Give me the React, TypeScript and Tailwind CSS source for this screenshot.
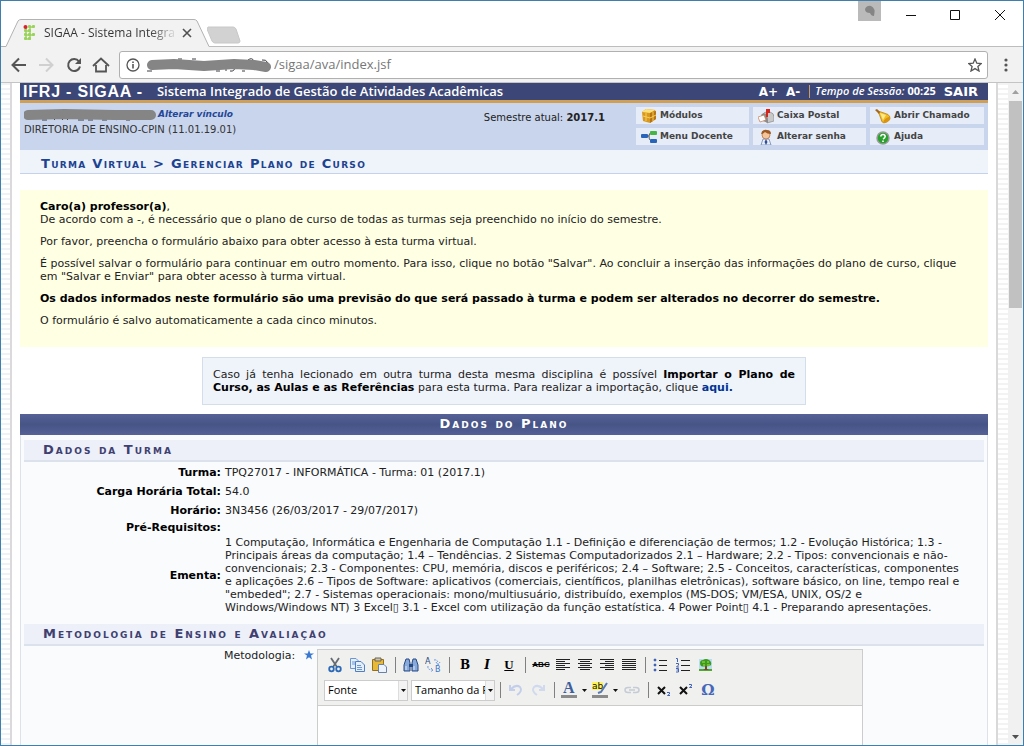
import type { ReactNode } from 'react';

const verdana = "font-['DejaVu_Sans','Verdana',sans-serif]";
const ui = "font-['Open_Sans','Noto_Sans',sans-serif]";

function Scribble({ className, d, tips }: { className: string; d: string; tips: string }) {
  return (
    <svg className={className} fill="none" aria-hidden="true">
      <path d={tips} stroke="#3a3d42" strokeWidth="1" />
      <path d={d} stroke="#858585" strokeWidth="10" strokeLinecap="round" strokeLinejoin="round" />
    </svg>
  );
}

function TitleBar() {
  return (
    <div className="flex h-[45px] shrink-0 items-end justify-between bg-white">
      <div className="flex items-end">
        <div className="relative flex h-[27px] w-[208px] items-center pl-[22px]">
          <svg className="absolute inset-0" width="210" height="28" fill="none" aria-hidden="true">
            <path d="M0 27.500H5L17 2Q18 .5 20 .5H193Q195 .5 196 2L208 27.500V28H0Z" fill="#f2f2f2" />
            <path d="M0 27.500H5L17 2Q18 .5 20 .5H193Q195 .5 196 2L208 27.500" stroke="#b2b2b2" />
          </svg>
          <svg className="relative" width="14" height="16" viewBox="0 0 14 16" fill="#9bd35b" aria-hidden="true">
            <rect x="5" y="0" width="3" height="3" rx="1" />
            <rect x="9" y="0" width="3" height="3" rx="1" />
            <rect x="1" y="4" width="3" height="3" rx="1" />
            <rect x="5" y="4" width="3" height="3" rx="1" />
            <rect x="1" y="8" width="3" height="3" rx="1" />
            <rect x="5" y="8" width="3" height="3" rx="1" />
            <rect x="9" y="8" width="3" height="3" rx="1" />
            <rect x="1" y="12" width="3" height="3" rx="1" />
            <rect x="5" y="12" width="3" height="3" rx="1" />
            <path d="M3 3V14M7 2V14M2 6H8M2 10H11M2 14H8M7 2H11" stroke="#9bd35b" strokeWidth="1.500" />
            <circle cx="2.500" cy="2" r="2" fill="#d8232a" />
          </svg>
          <span className="relative ml-[7px] w-[131px] overflow-hidden bg-linear-to-r from-[#333] from-80% to-[#ddd] bg-clip-text text-[12px] whitespace-nowrap text-transparent">
            SIGAA - Sistema Integrado
          </span>
          <button type="button" aria-label="Fechar guia" className="relative ml-[7px]">
            <svg width="10" height="10" stroke="#505050" strokeWidth="1.6">
              <path d="M1 1L9 9M9 1L1 9" />
            </svg>
          </button>
        </div>
        <button type="button" aria-label="Nova guia" className="mb-[2px] -ml-[2px]">
          <svg width="34" height="18">
            <path d="M1 1H26Q28 1 29 3L33 15Q33 17 31 17H8Q6 17 5 15L0 3Z" fill="#d2d2d2" stroke="#c8c8c8" />
          </svg>
        </button>
      </div>
      <div className="flex h-full items-start">
        <button type="button" aria-label="Usuário" className="mr-[24px] flex h-5 w-[23px] items-center justify-center bg-[#bababa]">
          <svg width="12" height="12" fill="#858585">
            <path d="M1 4Q3 0 7 1Q12 3 10 11Q7 11 6 8Q1 8 1 4Z" />
          </svg>
        </button>
        <button type="button" aria-label="Minimizar" className="mt-[8px] mr-[32px]">
          <svg width="12" height="12" stroke="#111">
            <path d="M1 6.5H11" />
          </svg>
        </button>
        <button type="button" aria-label="Maximizar" className="mt-[8px] mr-[33px]">
          <svg width="12" height="12" stroke="#111" fill="none">
            <path d="M1.500 1.500H10.500V10.500H1.500Z" />
          </svg>
        </button>
        <button type="button" aria-label="Fechar" className="mt-[8px] mr-[17px]">
          <svg width="12" height="12" stroke="#111">
            <path d="M1 1L11 11M11 1L1 11" />
          </svg>
        </button>
      </div>
    </div>
  );
}

function AddressBar() {
  return (
    <div className="flex h-[37px] shrink-0 items-center border-t border-b border-t-[#bdbdbd] border-b-[#c4c4c4] bg-[#f2f2f2] pl-[10px]">
      <button type="button" aria-label="Voltar">
        <svg width="16" height="16" fill="none" stroke="#555" strokeWidth="2">
          <path d="M15 8H2M8 1.500L1.500 8L8 14.500" />
        </svg>
      </button>
      <button type="button" aria-label="Avançar" className="ml-[11px]">
        <svg width="16" height="16" fill="none" stroke="#d0d0d0" strokeWidth="2">
          <path d="M1 8H14M8 1.500L14.500 8L8 14.500" />
        </svg>
      </button>
      <button type="button" aria-label="Recarregar" className="ml-3">
        <svg width="16" height="16" fill="none" stroke="#555" strokeWidth="2">
          <path d="M13 4.500A6 6 0 1 0 14 9.500" />
          <path d="M15 1V7H9Z" fill="#555" stroke="none" />
        </svg>
      </button>
      <button type="button" aria-label="Página inicial" className="ml-[10px]">
        <svg width="18" height="16" fill="none" stroke="#555" strokeWidth="1.800">
          <path d="M1 9L9 1.500L17 9M4 8V14.500H14V8" />
        </svg>
      </button>
      <div className="ml-[9px] flex h-[28px] flex-1 items-center rounded-[3px] border border-[#b0b0b0] bg-white pr-[5px] pl-[6px]">
        <svg width="14" height="14" fill="none" stroke="#555" aria-hidden="true">
          <circle cx="7" cy="7" r="6" strokeWidth="1.300" />
          <path d="M7 6V10.500M7 3.500V5" strokeWidth="1.600" />
        </svg>
        <Scribble
          className="ml-[4px] h-[16px] w-[130px]"
          d="M8 8L30 7L60 9L90 7L110 8L122 10"
          tips="M3 14H8M34 2H38M48 2H52M72 14H76M82 14V10M86 14Q91 15 91 9M98 14H101M104 3Q108 0 110 4M118 3Q122 2 124 6V12"
        />
        <input
          aria-label="Endereço"
          defaultValue="/sigaa/ava/index.jsf"
          className="min-w-0 flex-1 bg-transparent text-[13px] text-[#777] outline-none"
        />
        <button type="button" aria-label="Favoritar">
          <svg width="14" height="14" fill="none" stroke="#555" strokeWidth="1.300">
            <path d="M7 1L8.800 5.200L13.300 5.500L9.900 8.500L11 13L7 10.600L3 13L4.100 8.500L.7 5.500L5.200 5.200Z" />
          </svg>
        </button>
      </div>
      <button type="button" aria-label="Menu" className="mr-[15px] ml-[16px]">
        <svg width="4" height="14" fill="#555">
          <circle cx="2" cy="2" r="1.600" />
          <circle cx="2" cy="7" r="1.600" />
          <circle cx="2" cy="12" r="1.600" />
        </svg>
      </button>
    </div>
  );
}

const menu: { label: string; icon: ReactNode }[] = [
  {
    label: 'Módulos',
    icon: (
      <>
        <path d="M1 4L5 1L14 2L15 4V11L9 15L2 13Z" fill="#d9981e" />
        <path d="M1 4L5 1L14 2L9 5Z" fill="#ffe27a" />
        <path d="M9 5L15 3V11L9 15Z" fill="#b87312" />
        <path d="M2 8L9 10L15 7M5 5V13M12 4V13" stroke="#f6cf5a" fill="none" />
      </>
    ),
  },
  {
    label: 'Caixa Postal',
    icon: (
      <>
        <path d="M5 6Q6 4 9 4H12Q16 5 16 9V13L9 15V10Z" fill="#c9c9c9" stroke="#888" strokeWidth=".7" />
        <path d="M3 7Q5 4 8 6Q10 8 10 15L5 13Z" fill="#8a8a8a" />
        <path d="M0 9L6 7L8 12L2 14Z" fill="#fff" stroke="#c57b52" strokeWidth=".7" />
        <path d="M8 1H12V5H10V9H8Z" fill="#d4261c" />
      </>
    ),
  },
  {
    label: 'Abrir Chamado',
    icon: (
      <>
        <path d="M3 3L9 5Q14 6 15 9Q14 13 9 15Q6 14 6 11Z" fill="#f3bd21" stroke="#b47a0b" strokeWidth=".7" />
        <path d="M0 2L2 1L5 4L4 6Z" fill="#a3671d" />
        <path d="M5 5L11 7L8 12Z" fill="#ffe888" />
        <ellipse cx="12" cy="12" rx="4" ry="2" transform="rotate(-38 12 12)" fill="#d99512" />
      </>
    ),
  },
  {
    label: 'Menu Docente',
    icon: (
      <>
        <path d="M6 7H8Q8 4 10 4M8 7Q8 12 11 12" stroke="#555" fill="none" />
        <rect x="0" y="5" width="7" height="4" rx="1" fill="#2865ba" />
        <rect x="9" y="2" width="7" height="4" rx="1" fill="#45b544" />
        <rect x="9" y="10" width="7" height="4" rx="1" fill="#2865ba" />
      </>
    ),
  },
  {
    label: 'Alterar senha',
    icon: (
      <>
        <path d="M3 16L5 10H11L13 16Z" fill="#e8eef8" stroke="#6e87b4" strokeWidth=".8" />
        <path d="M8 10L9.500 13L8 16L6.500 13Z" fill="#2c4e99" />
        <circle cx="8" cy="6" r="4" fill="#f4c49a" stroke="#ad6c38" strokeWidth=".7" />
        <path d="M3 5Q4 0 9 1Q13 1 13 5Q9 5 7 3Q5 5 3 5Z" fill="#9c5a22" />
      </>
    ),
  },
  {
    label: 'Ajuda',
    icon: (
      <>
        <circle cx="8" cy="9" r="6" fill="#27a32b" stroke="#9a9a9a" strokeWidth="1.500" />
        <path d="M5.800 7.500Q6 5.500 8 5.500T10.200 7.500Q10 9 8 10M8 11.500V13" stroke="#fff" strokeWidth="1.600" fill="none" />
      </>
    ),
  },
];

function SystemHeader() {
  return (
    <header>
      <div className="flex h-[20px] items-center border-b-[3px] border-[#cf9f55] bg-[#3c4777] px-[3px] text-white">
        <h1 className="font-['Liberation_Sans',Arial,sans-serif] text-[16px] leading-[17px] font-bold tracking-wider whitespace-pre">IFRJ - SIGAA -</h1>
        <span className={`ml-[14px] flex-1 text-[13px] leading-[17px] font-semibold whitespace-nowrap ${ui}`}>
          Sistema Integrado de Gestão de Atividades Acadêmicas
        </span>
        <button type="button" className="text-[12px] font-bold">A+</button>
        <button type="button" className="ml-[8px] text-[12px] font-bold">A-</button>
        <span className="ml-[9px] h-[13px] w-px bg-[#c99d66]" />
        <span className={`ml-[5px] text-[11px] font-semibold italic ${ui}`}>Tempo de Sessão:</span>
        <span className={`ml-[3px] text-[11px] font-bold ${ui}`}>00:25</span>
        <a href="#sair" className="mr-[7px] ml-[8px] text-[13px] font-bold">SAIR</a>
      </div>
      <div className="flex h-[47px] justify-between bg-[#c8d5ec] pr-[4px] pl-[4px]">
        <div className="pt-[5px]">
          <div className="flex h-[13px] items-center">
            <Scribble
              className="h-[12px] w-[132px]"
              d="M4 6L40 5L90 6L127 6"
              tips="M18 11H23M30 11L33 8M38 11L41 8L44 11M54 11H60M64 11H69M78 11H83M92 11L96 8M102 11H106"
            />
            <a href="#vinculo" className="ml-[2px] text-[9px] font-bold text-[#264796] italic">Alterar vínculo</a>
          </div>
          <div className="mt-[1px] text-[10px] text-[#333]">DIRETORIA DE ENSINO-CPIN (11.01.19.01)</div>
        </div>
        <div className="flex">
          <p className="mt-[7px] mr-[31px] text-[10px] text-[#222]">
            Semestre atual: <b>2017.1</b>
          </p>
          <nav className="mt-[4px] grid h-[38px] grid-cols-[113px_113px_114px] grid-rows-2 gap-[4px]">
            {menu.map((item) => (
              <a key={item.label} href="#menu" className="flex items-center bg-[#e6ecf8] pl-[5px] text-[9px] font-bold text-[#444]">
                <svg className="mr-[3px]" width="16" height="16" viewBox="0 0 16 16" aria-hidden="true">{item.icon}</svg>
                {item.label}
              </a>
            ))}
          </nav>
        </div>
      </div>
      <h2 className="h-[24px] border-b border-[#c4d2eb] bg-[#eff3fa] pl-[21px] text-[13px] leading-[27px] font-bold tracking-widest text-[#1c4391] [font-variant:small-caps]">
        Turma Virtual &gt; Gerenciar Plano de Curso
      </h2>
    </header>
  );
}

function SectionTitle({ children }: { children: ReactNode }) {
  return (
    <h4 className="mx-[3px] h-[22px] border-b-2 border-[#dce2ec] bg-[#edf0f9] pl-[19px] text-[13px] leading-[20px] font-bold tracking-[2px] text-[#404070] [font-variant:small-caps]">
      {children}
    </h4>
  );
}

const details = [
  { label: 'Turma:', value: 'TPQ27017 - INFORMÁTICA - Turma: 01 (2017.1)', row: 'h-[19px]' },
  { label: 'Carga Horária Total:', value: '54.0', row: 'h-[19px]' },
  { label: 'Horário:', value: '3N3456 (26/03/2017 - 29/07/2017)', row: 'h-[19px]' },
  { label: 'Pré-Requisitos:', value: '', row: 'h-[15px]' },
  {
    label: 'Ementa:',
    value:
      '1 Computação, Informática e Engenharia de Computação 1.1 - Definição e diferenciação de termos; 1.2 - Evolução Histórica; 1.3 - Principais áreas da computação; 1.4 – Tendências. 2 Sistemas Computadorizados 2.1 – Hardware; 2.2 - Tipos: convencionais e não-convencionais; 2.3 - Componentes: CPU, memória, discos e periféricos; 2.4 – Software; 2.5 - Conceitos, características, componentes e\u00a0aplicações 2.6 – Tipos de Software: aplicativos (comerciais, científicos, planilhas eletrônicas), software básico, on line, tempo real e "embeded"; 2.7 - Sistemas operacionais: mono/multiusuário, distribuído, exemplos (MS-DOS; VM/ESA, UNIX, OS/2 e Windows/Windows\u00a0NT) 3 Excel▯ 3.1 - Excel com utilização da função estatística. 4 Power Point▯ 4.1 - Preparando apresentações.',
    row: 'h-[80px]',
  },
];

function Tool({ label, children }: { label: string; children: ReactNode }) {
  return (
    <button type="button" aria-label={label} className="flex w-[22px] shrink-0 items-center justify-center">
      <svg width="16" height="16" viewBox="0 0 16 16" fill="none" aria-hidden="true">{children}</svg>
    </button>
  );
}

function Letter({ label, className, children }: { label: string; className: string; children: ReactNode }) {
  return (
    <button type="button" aria-label={label} className={`w-[22px] shrink-0 text-center ${className}`}>
      {children}
    </button>
  );
}

function Separator() {
  return (
    <span className="flex w-[10px] shrink-0 justify-center">
      <span className="h-4 w-px bg-[#808080]" />
    </span>
  );
}

function DropTool({ label, children }: { label: string; children: ReactNode }) {
  return (
    <button type="button" aria-label={label} className="flex w-[31px] shrink-0 items-center pl-[2px]">
      <svg width="17" height="18" viewBox="0 0 17 18" fill="none" aria-hidden="true">{children}</svg>
      <svg className="ml-[4px]" width="5" height="3" aria-hidden="true"><path d="M0 0H5L2.500 3Z" fill="#111" /></svg>
    </button>
  );
}

function Combo({ label }: { label: string }) {
  return (
    <span className="flex h-[21px] w-[84px] items-center border border-[#ccc] bg-white">
      <select aria-label={label} className={`h-full w-[73px] appearance-none overflow-hidden pl-[3px] text-[11px] text-black ${ui}`}>
        <option>{label}</option>
      </select>
      <span className="flex h-full w-[9px] items-center justify-center border-l border-[#ddd] bg-[#f3f3f3]">
        <svg width="5" height="3" aria-hidden="true"><path d="M0 0H5L2.500 3Z" fill="#111" /></svg>
      </span>
    </span>
  );
}

function Editor() {
  return (
    <div className="h-[260px] w-[546px] border border-[#ccc] bg-white">
      <div className="flex h-[56px] flex-col border-b border-[#ccc] bg-[#f0f0ee] pt-[3px] pl-[6px]">
        <div className="flex h-[24px] items-center">
          <Tool label="Recortar">
            <path d="M4 1L10 10M12 1L6 10" stroke="#666b73" strokeWidth="1.800" />
            <circle cx="4.500" cy="12" r="2.300" stroke="#2b69b8" strokeWidth="1.800" />
            <circle cx="11.500" cy="12" r="2.300" stroke="#2b69b8" strokeWidth="1.800" />
          </Tool>
          <Tool label="Copiar">
            <path d="M1.500 1.500H7L9.500 4V11.500H1.500Z" fill="#e5effc" stroke="#6f96cd" />
            <path d="M6.500 4.500H12L15.500 8V14.500H6.500Z" fill="#e5effc" stroke="#4f7fc2" />
            <path d="M3 5H6M3 7H6M8 8.500H12M8 10.500H13M8 12.500H13" stroke="#6f96cd" />
          </Tool>
          <Tool label="Colar">
            <path d="M1.500 2.500H12.500V13.500H1.500Z" fill="#e8b937" stroke="#927023" />
            <path d="M4 1H10V4H4Z" fill="#c9c4b5" stroke="#6e654c" />
            <path d="M7.500 7.500H13L15.500 10V15.500H7.500Z" fill="#edf3fd" stroke="#6a80a5" />
          </Tool>
          <Separator />
          <Tool label="Localizar">
            <path d="M3 2H6L7 6V14H1V8ZM10 2H13L15 8V14H9V6Z" fill="#88a9d9" stroke="#244985" />
            <path d="M6 7H10V10H6Z" fill="#244985" />
            <path d="M3 9V13M11 9V13" stroke="#dce9fb" />
          </Tool>
          <Tool label="Substituir">
            <text x="0" y="7" fontSize="8" fill="#26497e" fontFamily="DejaVu Sans">A</text>
            <text x="10" y="15" fontSize="8" fill="#3975cc" fontFamily="DejaVu Sans">B</text>
            <path d="M9 3Q13 2 13 7M11 5L13 8L15 5M3 9Q2 13 8 13M6 11L8 13L6 15" stroke="#6e9ae0" strokeDasharray="2 1" />
          </Tool>
          <Separator />
          <Letter label="Negrito" className="font-['DejaVu_Serif',serif] text-[12px] font-bold text-black">B</Letter>
          <Letter label="Itálico" className="font-['DejaVu_Serif',serif] text-[12px] font-bold text-black italic">I</Letter>
          <Letter label="Sublinhado" className="font-['Liberation_Serif',serif] text-[13px] font-bold text-black underline">U</Letter>
          <Separator />
          <Letter label="Tachado" className="font-['Liberation_Sans',sans-serif] text-[8px] font-bold text-black line-through">ABC</Letter>
          <Tool label="Alinhar à esquerda"><path d="M1 2.500H15M1 4.500H10M1 6.500H15M1 8.500H10M1 10.500H15M1 12.500H10" stroke="#222" /></Tool>
          <Tool label="Centralizar"><path d="M1 2.500H15M3 4.500H13M1 6.500H15M3 8.500H13M1 10.500H15M3 12.500H13" stroke="#222" /></Tool>
          <Tool label="Alinhar à direita"><path d="M1 2.500H15M6 4.500H15M1 6.500H15M6 8.500H15M1 10.500H15M6 12.500H15" stroke="#222" /></Tool>
          <Tool label="Justificar"><path d="M1 2.500H15M1 4.500H15M1 6.500H15M1 8.500H15M1 10.500H15M1 12.500H15" stroke="#222" /></Tool>
          <Separator />
          <Tool label="Lista">
            <path d="M6 3.500H14M6 8.500H14M6 13.500H14" stroke="#222" />
            <path d="M1 2H3V4H1ZM1 7H3V9H1ZM1 12H3V14H1Z" fill="#4263b5" stroke="#4263b5" strokeWidth=".5" />
          </Tool>
          <Tool label="Lista numerada">
            <path d="M6 3.500H15M6 8.500H15M6 13.500H15" stroke="#222" />
            <path d="M1 1.500H2.500V5M1 6.500H3.500V8L1.500 10H4M1 11.500H3.500V15H1M1.500 13H3.500" stroke="#4263b5" />
          </Tool>
          <Tool label="Imagem">
            <path d="M2 2H15V14H2Z" fill="#b9dcf5" />
            <path d="M2 12H15V14H2Z" fill="#55a72b" />
            <path d="M8 7H10L10 12L12 13H6L8 12Z" fill="#754a1e" />
            <path d="M3 6Q3 3 6 3Q9 1 12 3Q15 5 14 8Q12 10 9 9Q6 10 4 9Q3 8 3 6Z" fill="#3c9a1d" />
            <path d="M5 5H8M10 5H12M6 8H8M10 8H13" stroke="#b1e04c" />
          </Tool>
        </div>
        <div className="flex h-[26px] items-center">
          <Combo label="Fonte" />
          <span className="w-[3px]" />
          <Combo label="Tamanho da Fonte" />
          <Separator />
          <Tool label="Desfazer"><path d="M2 3V8H7M3 7Q8 2 12 5Q15 9 9 13" stroke="#c3cfea" strokeWidth="2" /></Tool>
          <Tool label="Refazer"><path d="M14 3V8H9M13 7Q8 2 4 5Q1 9 7 13" stroke="#d0d9ee" strokeWidth="2" /></Tool>
          <Separator />
          <DropTool label="Cor do texto">
            <text x="2" y="12" fontSize="16" fontWeight="bold" fontFamily="Liberation Serif" fill="#3d5f9d">A</text>
            <path d="M0 14H16V17H0Z" fill="#8b8b8b" />
          </DropTool>
          <DropTool label="Cor de fundo">
            <path d="M0 1H11V9H0Z" fill="#fff35c" />
            <text x="0" y="8" fontSize="9" fontFamily="DejaVu Sans" fill="#111">ab</text>
            <path d="M15 2L9 11L6 12" stroke="#5878b0" strokeWidth="2" />
            <path d="M0 14H16V17H0Z" fill="#8b8b8b" />
          </DropTool>
          <Tool label="Link">
            <path d="M7 5.500H4Q1 5.500 1 8T4 10.500H7M9 5.500H12Q15 5.500 15 8T12 10.500H9M5 8H11" stroke="#c5ccd6" strokeWidth="1.500" />
          </Tool>
          <Separator />
          <Tool label="Subscrito">
            <path d="M2 5L9 12M9 5L2 12" stroke="#111" strokeWidth="2" />
            <path d="M11 10.500H13.500V12L11.500 13.500H14" stroke="#4263b5" />
          </Tool>
          <Tool label="Sobrescrito">
            <path d="M2 5L9 12M9 5L2 12" stroke="#111" strokeWidth="2" />
            <path d="M11 2.500H13.500V4L11.500 5.500H14" stroke="#4263b5" />
          </Tool>
          <Letter label="Caractere especial" className="font-['DejaVu_Serif',serif] text-[15px] font-bold text-[#4667ba]">Ω</Letter>
        </div>
      </div>
      <textarea id="metodologia" className="h-[200px] w-full resize-none outline-none" />
    </div>
  );
}

function PlanForm() {
  return (
    <section className="border-x border-b border-[#dee2e8] bg-[#f9fbfd]">
      <h3 className="-mx-px mb-[5px] h-[21px] bg-linear-to-b from-[#566197] via-[#465486] to-[#566197] text-center text-[13px] leading-[20px] font-bold tracking-[2px] text-white [font-variant:small-caps]">
        Dados do Plano
      </h3>
      <SectionTitle>Dados da Turma</SectionTitle>
      <table className="mt-[1px] mb-[9px] w-full leading-[13px]">
        <tbody>
          {details.map((item) => (
            <tr key={item.label} className={item.row}>
              <th scope="row" className="w-[200px] text-right align-middle font-bold whitespace-nowrap text-black">{item.label}</th>
              <td className="pr-[12px] pl-[4px] align-middle">{item.value}</td>
            </tr>
          ))}
        </tbody>
      </table>
      <SectionTitle>Metodologia de Ensino e Avaliação</SectionTitle>
      <div className="flex items-start pt-[3px] pl-[203px]">
        <label htmlFor="metodologia" className="w-[80px] leading-[13px]">Metodologia:</label>
        <svg className="mt-[1px] mr-[3px]" width="10" height="10" viewBox="0 0 10 10" aria-hidden="true">
          <path d="M5 0L6.300 3.500H10L7 5.600L8 9.500L5 7.200L2 9.500L3 5.600L0 3.500H3.700Z" fill="#3b78d1" />
        </svg>
        <Editor />
      </div>
    </section>
  );
}

export default function App() {
  return (
    <div className={`flex h-screen flex-col overflow-hidden border border-[#3f7fae] text-[11px] text-[#222] ${ui}`}>
      <TitleBar />
      <AddressBar />
      <div className={`flex min-h-0 flex-1 ${verdana}`}>
        <div className="w-[11px] shrink-0 border-r-2 border-[#dcd9dc] bg-[repeating-linear-gradient(#f0f3f6_0_2px,#ffffff_2px_5px)]" />
        <main className="min-w-0 flex-1 overflow-hidden bg-white px-[8px]">
          <SystemHeader />
          <div className="mt-[16px] space-y-[9px] bg-[#ffffe3] px-[20px] pt-[10px] pb-[20px] leading-[13px]">
            <p>
              <b className="text-black">Caro(a) professor(a)</b>,<br />
              De acordo com a -, é necessário que o plano de curso de todas as turmas seja preenchido no início do semestre.
            </p>
            <p>Por favor, preencha o formulário abaixo para obter acesso à esta turma virtual.</p>
            <p>
              É possível salvar o formulário para continuar em outro momento. Para isso, clique no botão "Salvar". Ao concluir a
              inserção das informações do plano de curso, clique em "Salvar e Enviar" para obter acesso à turma virtual.
            </p>
            <p className="font-bold text-black">
              Os dados informados neste formulário são uma previsão do que será passado à turma e podem ser alterados no decorrer do semestre.
            </p>
            <p>O formulário é salvo automaticamente a cada cinco minutos.</p>
          </div>
          <div className="mx-auto mt-[10px] mb-[9px] max-w-[604px] border border-[#d3deea] bg-[#eff3fa] px-[10px] py-[10px] text-justify leading-[13px]">
            Caso já tenha lecionado em outra turma desta mesma disciplina é possível{' '}
            <b className="text-black">Importar o Plano de Curso, as Aulas e as Referências</b> para esta turma. Para realizar a
            importação, clique <a href="#importar" className="font-bold text-[#003395]">aqui.</a>
          </div>
          <PlanForm />
        </main>
        <div className="w-[12px] shrink-0 border-l-2 border-[#d9d9d9] bg-[repeating-linear-gradient(#f3f3f3_0_2px,#ffffff_2px_5px)]" />
        <div className="flex w-[15px] shrink-0 flex-col items-center bg-[#f1f1f1]">
          <svg className="my-[7px]" width="7" height="4" aria-hidden="true"><path d="M0 4L3.500 0L7 4Z" fill="#a0a0a0" /></svg>
          <div className="h-[207px] w-[13px] bg-[#c1c1c1]" />
          <svg className="mt-auto mb-[6px]" width="7" height="4" aria-hidden="true"><path d="M0 0H7L3.500 4Z" fill="#505050" /></svg>
        </div>
      </div>
    </div>
  );
}
